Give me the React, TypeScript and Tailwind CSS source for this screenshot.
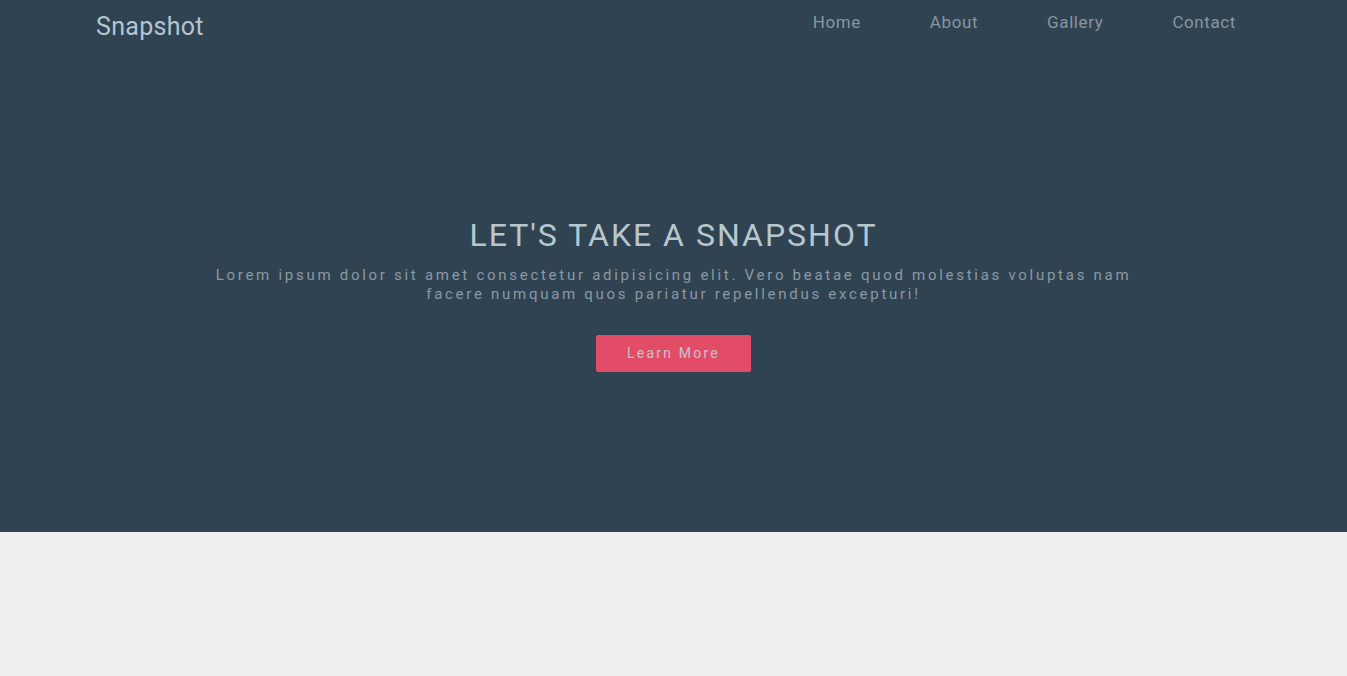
export default function App() {
  return (
    <div className="min-h-[676px] bg-[#efefef]" style={{ fontFamily: 'Roboto, "Open Sans", sans-serif' }}>
      <section className="h-[532px] bg-[#304352] flex flex-col">
        <nav className="flex items-start justify-between pl-[96px] pr-[111px]">
          <a className="mt-[12px] text-[25px] leading-[30px] tracking-[0.3px] text-[#b4c6d0]">Snapshot</a>
          <ul className="flex gap-[69px] mt-[11px]">
            <li className="text-[17px] leading-[22px] tracking-[0.6px] text-[#8796a1]">Home</li>
            <li className="text-[17px] leading-[22px] tracking-[0.6px] text-[#8796a1]">About</li>
            <li className="text-[17px] leading-[22px] tracking-[0.6px] text-[#8796a1]">Gallery</li>
            <li className="text-[17px] leading-[22px] tracking-[0.6px] text-[#8796a1]">Contact</li>
          </ul>
        </nav>
        <div className="flex flex-col items-center mt-[173px]">
          <h1 className="text-[32px] leading-[40px] tracking-[2px] text-[#b8c7ce]">LET'S TAKE A SNAPSHOT</h1>
          <p className="mt-[11px] max-w-[935px] text-center text-[15px] leading-[19px] tracking-[2.72px] text-[#8b99a2]">
            Lorem ipsum dolor sit amet consectetur adipisicing elit. Vero beatae quod molestias voluptas nam facere numquam quos pariatur repellendus excepturi!
          </p>
          <button className="mt-[31px] w-[155px] h-[37px] rounded-[2px] bg-[#e34c67] text-[14px] tracking-[2.2px] text-[#c3c4cc]">
            Learn More
          </button>
        </div>
      </section>
    </div>
  );
}
